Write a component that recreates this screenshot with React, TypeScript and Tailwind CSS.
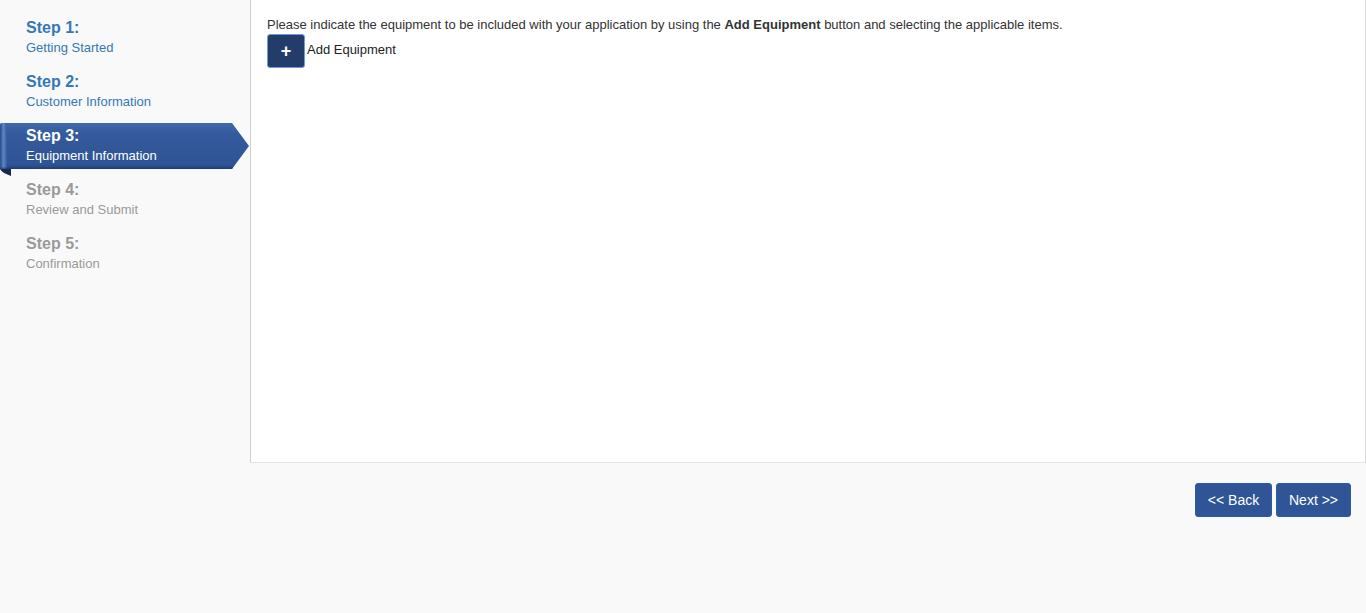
const steps = [
	{ n: 1, label: "Getting Started", state: "done" },
	{ n: 2, label: "Customer Information", state: "done" },
	{ n: 3, label: "Equipment Information", state: "active" },
	{ n: 4, label: "Review and Submit", state: "todo" },
	{ n: 5, label: "Confirmation", state: "todo" },
];

function Ribbon() {
	return (
		<svg
			className="absolute left-0 top-[-3px] pointer-events-none"
			width="250"
			height="56"
			viewBox="0 0 250 56"
		>
			<defs>
				<linearGradient id="rb" x1="0" y1="0" x2="0" y2="1">
					<stop offset="0" stopColor="#4068ab" />
					<stop offset="0.25" stopColor="#345a9d" />
					<stop offset="0.9" stopColor="#2f5495" />
					<stop offset="1" stopColor="#24457d" />
				</linearGradient>
				<linearGradient id="rl" x1="0" y1="0" x2="1" y2="0">
					<stop offset="0" stopColor="#2a4c88" />
					<stop offset="0.5" stopColor="#5d84c4" />
					<stop offset="1" stopColor="#345a9d" />
				</linearGradient>
			</defs>
			<path d="M0,44 H11 V53 L4,50 Q1,48 0,46 Z" fill="#182a4c" />
			<path d="M2,0 H232 L249,23 L232,46 H0 V3 Q0,0 2,0 Z" fill="url(#rb)" />
			<path d="M0,3 Q0,0 2,0 H7 V46 H0 Z" fill="url(#rl)" />
			<path d="M0,46 H232 L233,44.5 H0 Z" fill="#1f3a6b" opacity="0.6" />
		</svg>
	);
}

export default function App() {
	return (
		<div
			className="w-[1366px] h-[613px] bg-[#f9f9f9] flex flex-col text-[#333]"
			style={{ fontFamily: '"Liberation Sans", Arial, sans-serif' }}
		>
			<div className="flex h-[463px]">
				{/* Steps */}
				<div className="w-[250px] pt-[18px] shrink-0">
					{steps.map((s) => (
						<div key={s.n} className="relative h-[54px] pl-[26px]">
							{s.state === "active" && <Ribbon />}
							<div
								className={
									"relative text-[16px] font-bold leading-[20px] " +
									(s.state === "active"
										? "text-white"
										: s.state === "done"
											? "text-[#3678b5]"
											: "text-[#9a9a9a]")
								}
							>
								Step {s.n}:
							</div>
							<div
								className={
									"relative text-[13px] leading-[20px] " +
									(s.state === "active"
										? "text-white"
										: s.state === "done"
											? "text-[#3678b5]"
											: "text-[#9a9a9a]")
								}
							>
								{s.label}
							</div>
						</div>
					))}
				</div>

				{/* Main panel */}
				<div className="flex-1 bg-white border-l border-l-[#cfcfcf] border-b border-b-[#e4e4e4] border-r border-r-[#dcdcdc] pl-[16px] pt-[17px]">
					<p className="text-[13px] leading-[16px] text-[#333]">
						Please indicate the equipment to be included with your application by using the{" "}
						<b>Add Equipment</b> button and selecting the applicable items.
					</p>
					<div className="flex items-center gap-[2px] mt-[1px]">
						<button className="w-[38px] h-[34px] rounded-[3px] bg-[#243c69] border border-[#6a9be0] flex items-center justify-center text-white text-[18px] font-bold leading-none">
							+
						</button>
						<span className="text-[13px] text-[#222] -mt-[2px]">Add Equipment</span>
					</div>
				</div>
			</div>

			{/* Nav buttons */}
			<div className="flex justify-end gap-[4px] pr-[15px] pt-[20px]">
				<button className="w-[77px] h-[34px] rounded-[3px] bg-[#2f5597] border border-[#2a5ba6] text-white text-[14px]">
					&lt;&lt; Back
				</button>
				<button className="w-[75px] h-[34px] rounded-[3px] bg-[#2f5597] border border-[#2a5ba6] text-white text-[14px]">
					Next &gt;&gt;
				</button>
			</div>
		</div>
	);
}
